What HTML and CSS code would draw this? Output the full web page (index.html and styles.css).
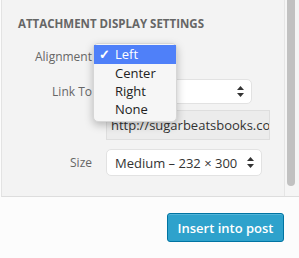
FILE: index.html
```html
<!DOCTYPE html>
<html>
<head>
    <meta charset="UTF-8">
    <title>Attachment Display Settings</title>
    <link rel="stylesheet" href="styles.css">
</head>
<body>
    <div class="panel">
        <div class="settings">
            <h2 class="settings-title">Attachment Display Settings</h2>
            <div class="setting row-align">
                <span class="label">Alignment</span>
                <div class="control">
                    <div class="select select-align"></div>
                    <ul class="menu">
                        <li class="menu-item selected"><span class="check">✓</span>Left</li>
                        <li class="menu-item">Center</li>
                        <li class="menu-item">Right</li>
                        <li class="menu-item">None</li>
                    </ul>
                </div>
            </div>
            <div class="setting row-link">
                <span class="label">Link To</span>
                <div class="control">
                    <div class="select select-link">
                        <span class="value"></span>
                        <svg class="arrows" width="7" height="11" viewBox="0 0 7 11"><path d="M3.5 0 L7 4 L0 4 Z M0 7 L7 7 L3.5 11 Z" fill="#333"/></svg>
                    </div>
                </div>
            </div>
            <div class="setting row-url">
                <span class="label"></span>
                <div class="control">
                    <div class="url"><span class="url-text">http://sugarbeatsbooks.co</span></div>
                </div>
            </div>
            <div class="setting row-size">
                <span class="label">Size</span>
                <div class="control">
                    <div class="select select-size">
                        <span class="value">Medium – 232 × 300</span>
                        <svg class="arrows" width="7" height="11" viewBox="0 0 7 11"><path d="M3.5 0 L7 4 L0 4 Z M0 7 L7 7 L3.5 11 Z" fill="#333"/></svg>
                    </div>
                </div>
            </div>
        </div>
        <div class="scrollbar"><div class="thumb"></div></div>
    </div>
    <div class="toolbar">
        <button class="btn-insert">Insert into post</button>
    </div>
</body>
</html>
```

FILE: styles.css
```css
body {
    margin: 0;
    background: #fcfcfc;
    font-family: "Open Sans", "Liberation Sans", sans-serif;
    overflow: hidden;
}

.panel {
    display: flex;
    height: 196px;
    margin-left: 1px;
    border-left: 1px solid #e3e3e3;
    border-bottom: 1px solid #dddddd;
    background: #f3f3f3;
}

.settings {
    width: 284px;
    border-right: 1px solid #e5e5e5;
}

.scrollbar {
    width: 12px;
    background: #f5f5f5;
    padding-left: 2px;
}

.thumb {
    width: 8px;
    height: 186px;
    background: #c1c1c1;
    border-radius: 0 0 4px 4px;
}

.settings-title {
    margin: 16px 0 0 16px;
    font-size: 11.5px;
    line-height: 16px;
    font-weight: 700;
    color: #666;
    text-transform: uppercase;
}

.setting {
    display: flex;
    align-items: center;
}

.label {
    width: 90px;
    text-align: right;
    font-size: 12px;
    color: #666;
    flex-shrink: 0;
}

.control {
    margin-left: 14px;
    position: relative;
}

.row-align {
    margin-top: 12px;
    height: 25px;
}

.row-link {
    margin-top: 10px;
    height: 25px;
}

.row-url {
    margin-top: 6px;
    height: 30px;
}

.row-size {
    margin-top: 9px;
    height: 27px;
}

.select {
    box-sizing: border-box;
    background: #fff;
    border: 1px solid #e2e2e2;
    border-radius: 5px;
    display: flex;
    align-items: center;
    padding-left: 8px;
    padding-right: 7px;
    font-size: 13px;
    color: #333;
}

.select-align {
    width: 70px;
    height: 25px;
}

.select-link {
    width: 146px;
    height: 25px;
}

.select-size {
    width: 156px;
    height: 27px;
}

.value {
    flex: 1;
    white-space: nowrap;
}

.url {
    box-sizing: border-box;
    width: 164px;
    height: 30px;
    background: #ececec;
    border: 1px solid #dedede;
    padding-left: 4px;
    display: flex;
    align-items: center;
    font-size: 13px;
    color: #333;
    white-space: nowrap;
    overflow: hidden;
}

.url-text {
    line-height: 15px;
    margin-top: 1px;
}

.menu {
    position: absolute;
    left: -13px;
    top: -1px;
    width: 82px;
    margin: 0;
    padding: 1px 0 3px;
    list-style: none;
    background: #f6f6f6;
    border: 1px solid #d6d6d6;
    border-radius: 5px;
    box-shadow: 0 3px 8px rgba(0, 0, 0, 0.25);
    z-index: 2;
}

.menu-item {
    height: 18px;
    line-height: 18px;
    padding-left: 21px;
    font-size: 13px;
    color: #222;
}

.menu-item.selected {
    background: #4f80f9;
    color: #fff;
    height: 19px;
    line-height: 19px;
    position: relative;
}

.check {
    position: absolute;
    left: 5px;
    font-size: 13px;
    font-weight: 700;
}

.toolbar {
    display: flex;
    justify-content: flex-end;
    padding: 16px 15px 0 0;
}

.btn-insert {
    width: 117px;
    height: 29px;
    background: #2ea2cc;
    border: 1px solid #0074a2;
    border-radius: 3px;
    box-shadow: inset 0 1px 0 rgba(120, 200, 230, 0.5);
    color: #fff;
    font-family: "Open Sans", "Liberation Sans", sans-serif;
    font-size: 13px;
    font-weight: 600;
    padding: 0;
}
```
